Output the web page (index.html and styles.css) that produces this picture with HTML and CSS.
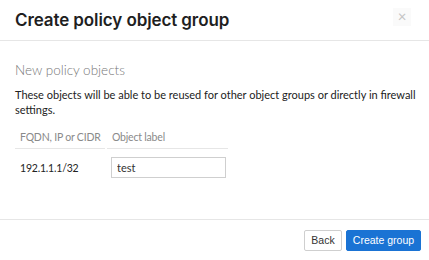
FILE: index.html
```html
<!DOCTYPE html>
<html lang="en">
<head>
    <meta charset="UTF-8">
    <title>Create policy object group</title>
    <link rel="stylesheet" href="styles.css">
</head>
<body>
    <div class="modal">
        <div class="modal-header">
            <h1>Create policy object group</h1>
            <span class="close">&times;</span>
        </div>

        <div class="modal-body">
            <h2>New policy objects</h2>
            <p>These objects will be able to be reused for other object groups or directly in firewall settings.</p>

            <table class="objects">
                <thead>
                    <tr>
                        <th class="col-cidr">FQDN, IP or CIDR</th>
                        <th class="col-label">Object label</th>
                    </tr>
                </thead>
                <tbody>
                    <tr>
                        <td>192.1.1.1/32</td>
                        <td><input type="text" value="test"></td>
                    </tr>
                </tbody>
            </table>
        </div>

        <div class="modal-footer">
            <button class="btn btn-back">Back</button>
            <button class="btn btn-primary">Create group</button>
        </div>
    </div>
</body>
</html>
```

FILE: styles.css
```css
body {
    margin: 0;
    background: #fff;
    font-family: Lato, "Noto Sans", sans-serif;
    color: #222;
}
.modal {
    width: 429px;
    height: 260px;
    display: flex;
    flex-direction: column;
}
.modal-header {
    height: 40px;
    border-bottom: 1px solid #e6e6e6;
    display: flex;
    align-items: center;
    justify-content: space-between;
    padding: 0 15px;
}
h1 {
    font-family: Inter, "Noto Sans", sans-serif;
    font-size: 17px;
    font-weight: 600;
    margin: 0;
    color: #1f1f1f;
    letter-spacing: -0.1px;
}
.close {
    width: 18px;
    height: 18px;
    line-height: 17px;
    text-align: center;
    font-size: 15px;
    color: #c4c4c4;
    background: #fafafa;
    margin-right: 3px;
    margin-top: -6px;
}
.modal-body {
    flex: 1;
    padding: 21px 8px 0 15px;
    border-bottom: 1px solid #e6e6e6;
}
h2 {
    font-size: 13.5px;
    font-weight: 300;
    color: #777;
    margin: 0 0 9px;
}
p {
    font-size: 11px;
    line-height: 15px;
    margin: 0 0 9px;
    color: #222;
}
.objects {
    border-collapse: separate;
    border-spacing: 2px 0;
    margin-left: -2px;
    font-size: 10.5px;
    letter-spacing: -0.2px;
    table-layout: fixed;
    width: 215px;
}
.objects th {
    font-weight: 400;
    color: #8a8a8a;
    text-align: left;
    white-space: nowrap;
    padding: 5px 5px 5px;
    border-bottom: 1px solid #e6e6e6;
}
.col-cidr {
    width: 80px;
}
.col-label {
    width: 111px;
}
.objects td {
    padding: 8px 5px 0 5px;
    color: #222;
}
.objects td input {
    width: 115px;
    height: 21px;
    box-sizing: border-box;
    border: 1px solid #cfcfcf;
    padding: 0 5px;
    font-family: Lato, "Noto Sans", sans-serif;
    font-size: 11px;
    color: #333;
    margin-left: -1px;
}
.modal-footer {
    height: 40px;
    display: flex;
    justify-content: flex-end;
    align-items: center;
    gap: 4px;
    padding: 0 8px 0 0;
}
.btn {
    height: 21px;
    padding: 0;
    border: 1px solid #cfcfcf;
    border-radius: 2px;
    background: #fff;
    font-family: "Liberation Sans", Arial, sans-serif;
    font-size: 10.5px;
    color: #333;
}
.btn-back {
    width: 38px;
}
.btn-primary {
    width: 75px;
    background: #1a73d4;
    border-color: #1a73d4;
    color: #fff;
}
```
